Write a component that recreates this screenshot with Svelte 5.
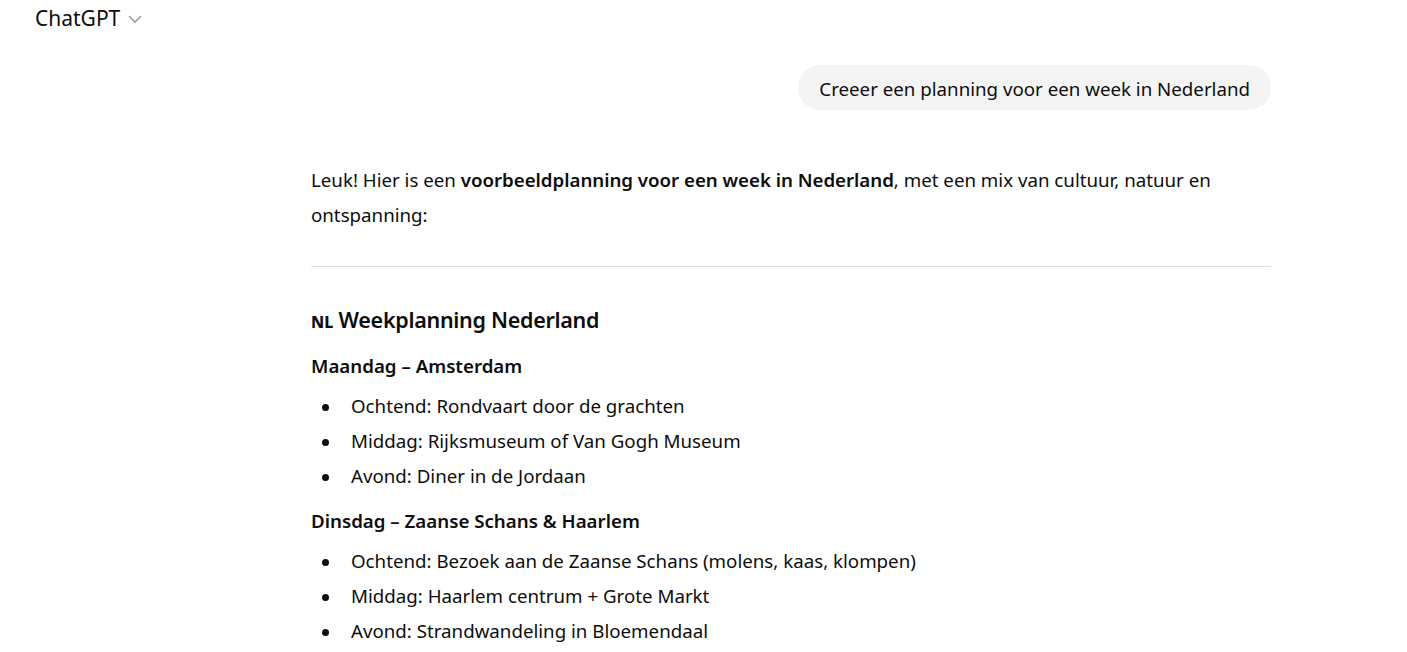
<script>
    const days = [
        {
            title: 'Maandag – Amsterdam',
            items: [
                'Ochtend: Rondvaart door de grachten',
                'Middag: Rijksmuseum of Van Gogh Museum',
                'Avond: Diner in de Jordaan'
            ]
        },
        {
            title: 'Dinsdag – Zaanse Schans & Haarlem',
            items: [
                'Ochtend: Bezoek aan de Zaanse Schans (molens, kaas, klompen)',
                'Middag: Haarlem centrum + Grote Markt',
                'Avond: Strandwandeling in Bloemendaal'
            ]
        }
    ];
</script>

<div class="page">
    <header class="topbar">
        <span class="model">ChatGPT</span>
        <svg class="chevron" width="14" height="14" viewBox="0 0 14 14" fill="none" aria-hidden="true">
            <path d="M1 4 7 10l6-6" stroke="#8f8f8f" stroke-width="1.3" />
        </svg>
    </header>

    <main class="thread">
        <div class="user-row">
            <div class="bubble">Creeer een planning voor een week in Nederland</div>
        </div>

        <p class="intro">Leuk! Hier is een <strong>voorbeeldplanning voor een week in Nederland</strong>, met een mix van cultuur, natuur en ontspanning:</p>

        <hr />

        <h3><span class="flag">NL</span> Weekplanning Nederland</h3>

        {#each days as day}
            <p class="day">{day.title}</p>
            <ul>
                {#each day.items as item}
                    <li>{item}</li>
                {/each}
            </ul>
        {/each}
    </main>
</div>

<style>
    :global(body) {
        background: #fff;
    }
    .page {
        height: 652px;
        overflow: hidden;
        font-family: "Noto Sans", "Open Sans", sans-serif;
        font-size: 18.72px;
        color: #0d0d0d;
    }
    .topbar {
        display: flex;
        align-items: center;
        gap: 8px;
        height: 36px;
        padding-left: 35px;
    }
    .model {
        font-size: 21px;
        line-height: 36px;
    }
    .chevron {
        margin-top: 2px;
    }
    .thread {
        width: 960px;
        margin-left: 311px;
        padding-top: 29px;
    }
    .user-row {
        display: flex;
        justify-content: flex-end;
    }
    .bubble {
        background: #f4f4f4;
        border-radius: 22px;
        height: 45px;
        line-height: 48px;
        padding: 0 21px;
    }
    .intro {
        margin: 52px 0 0;
        line-height: 35px;
    }
    strong {
        font-weight: 600;
        letter-spacing: -0.03px;
    }
    hr {
        border: none;
        border-top: 1px solid #dedede;
        margin: 34px 0 0;
    }
    h3 {
        margin: 37px 0 0;
        font-size: 21.5px;
        line-height: 31px;
        font-weight: 600;
        letter-spacing: -0.3px;
    }
    .flag {
        font-size: 16px;
        font-weight: 800;
        letter-spacing: 0;
    }
    .day {
        margin: 10px 0 0;
        font-weight: 600;
        line-height: 35px;
    }
    ul {
        margin: 5px 0 0;
        padding-left: 40px;
        list-style: none;
    }
    li {
        line-height: 35px;
    }
    li::before {
        content: "";
        display: inline-block;
        width: 7px;
        height: 7px;
        margin-left: -29px;
        margin-right: 22px;
        border-radius: 50%;
        background: #0d0d0d;
        vertical-align: 2px;
    }
</style>
